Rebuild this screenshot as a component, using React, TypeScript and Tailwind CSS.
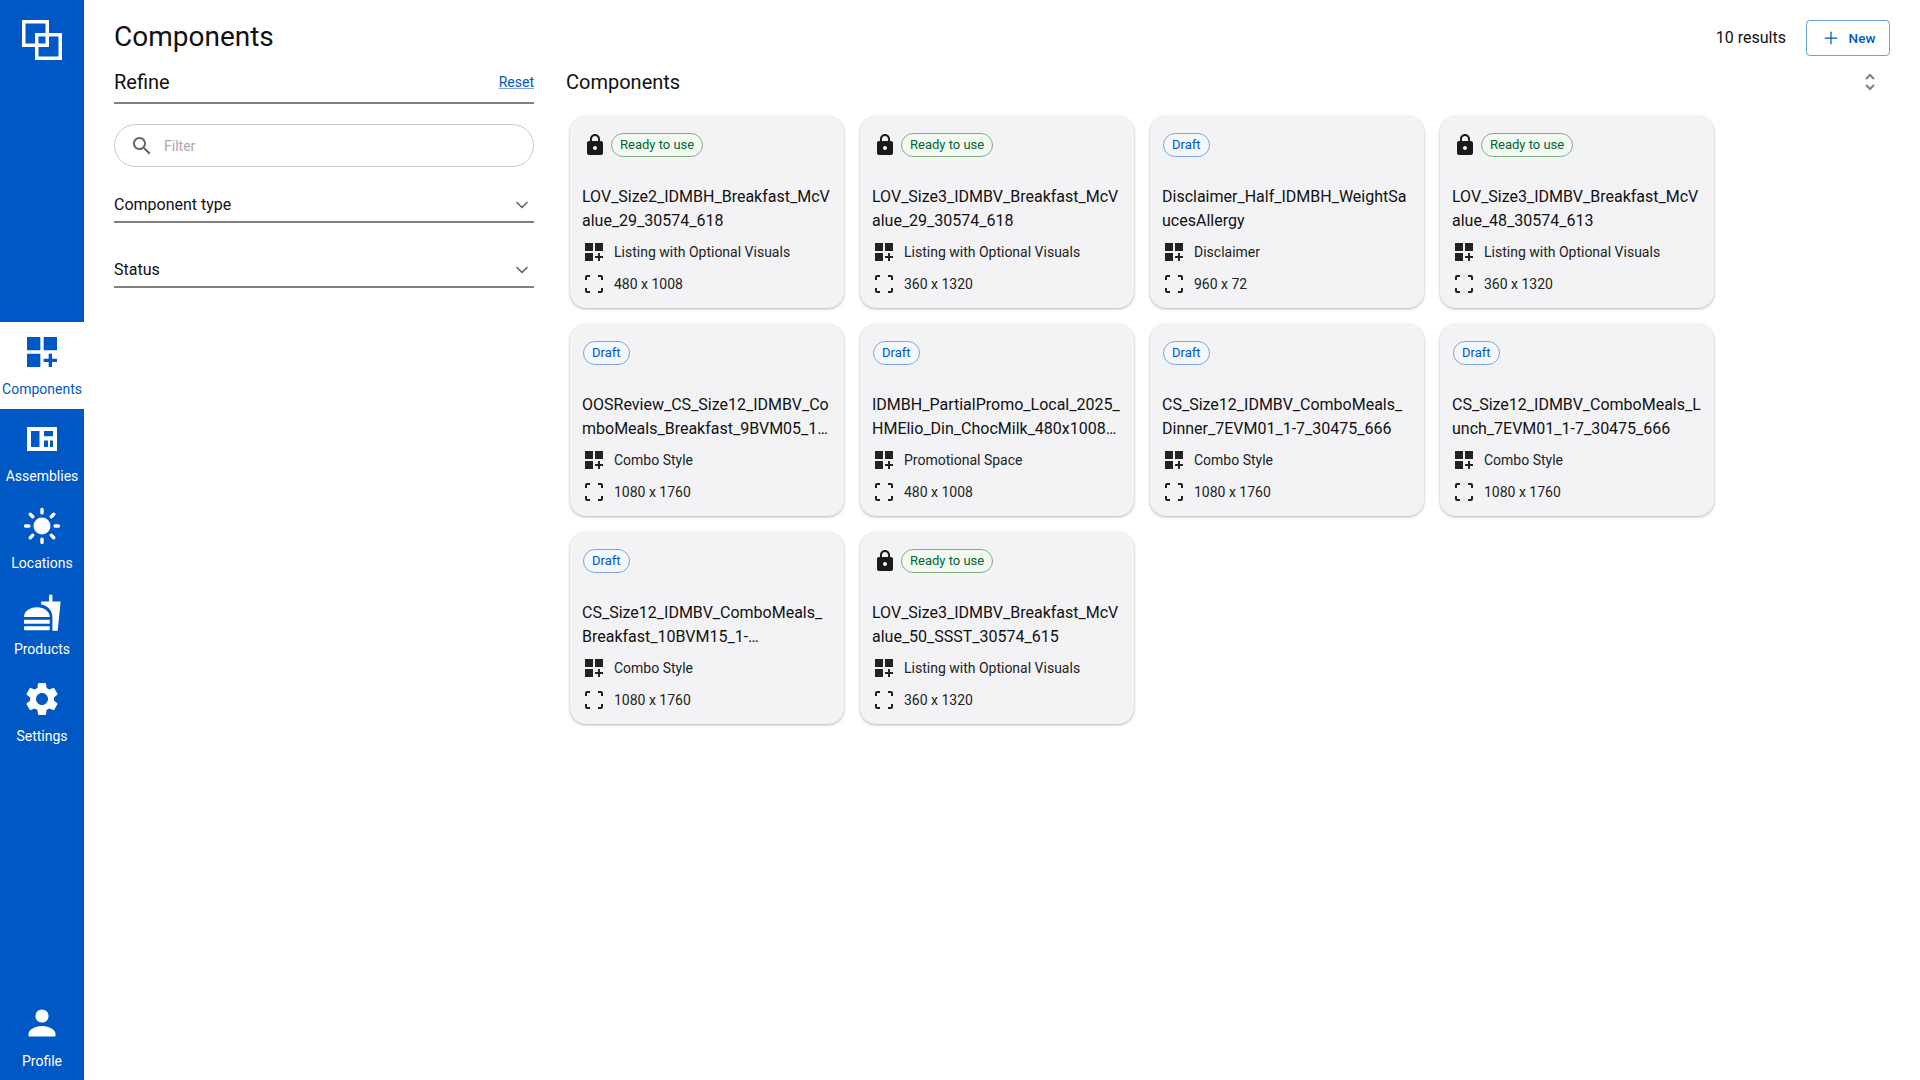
import React from "react";
import { ChevronDown, Plus } from "lucide-react";

const DASHBOARD =
  "M3 3h8v8H3zm10 0h8v8h-8zM3 13h8v8H3zm15 0h-2v3h-3v2h3v3h2v-3h3v-2h-3z";
const LOCK =
  "M18 8h-1V6c0-2.76-2.24-5-5-5S7 3.24 7 6v2H6c-1.1 0-2 .9-2 2v10c0 1.1.9 2 2 2h12c1.1 0 2-.9 2-2V10c0-1.1-.9-2-2-2zm-6 9c-1.1 0-2-.9-2-2s.9-2 2-2 2 .9 2 2-.9 2-2 2zm3.1-9H8.9V6c0-1.71 1.39-3.1 3.1-3.1 1.71 0 3.1 1.39 3.1 3.1v2z";
const SETTINGS =
  "M19.14 12.94c.04-.3.06-.61.06-.94 0-.32-.02-.64-.07-.94l2.03-1.58c.18-.14.23-.41.12-.61l-1.92-3.32c-.12-.22-.37-.29-.59-.22l-2.39.96c-.5-.38-1.03-.7-1.62-.94l-.36-2.54c-.04-.24-.24-.41-.48-.41h-3.84c-.24 0-.43.17-.47.41l-.36 2.54c-.59.24-1.13.57-1.62.94l-2.39-.96c-.22-.08-.47 0-.59.22L2.74 8.87c-.12.21-.08.47.12.61l2.03 1.58c-.05.3-.09.63-.09.94s.02.64.07.94l-2.03 1.58c-.18.14-.23.41-.12.61l1.92 3.32c.12.22.37.29.59.22l2.39-.96c.5.38 1.03.7 1.62.94l.36 2.54c.05.24.24.41.48.41h3.84c.24 0 .44-.17.47-.41l.36-2.54c.59-.24 1.13-.56 1.62-.94l2.39.96c.22.08.47 0 .59-.22l1.92-3.32c.12-.22.07-.47-.12-.61l-2.01-1.58zM12 15.6c-1.98 0-3.6-1.62-3.6-3.6s1.62-3.6 3.6-3.6 3.6 1.62 3.6 3.6-1.62 3.6-3.6 3.6z";
const SEARCH =
  "M15.5 14h-.79l-.28-.27C15.41 12.59 16 11.11 16 9.5 16 5.91 13.09 3 9.5 3S3 5.91 3 9.5 5.91 16 9.5 16c1.61 0 3.09-.59 4.23-1.57l.27.28v.79l5 4.99L20.49 19l-4.99-5zm-6 0C7.01 14 5 11.99 5 9.5S7.01 5 9.5 5 14 7.01 14 9.5 11.99 14 9.5 14z";

const DashboardIcon = ({ className }: { className: string }) => (
  <svg viewBox="0 0 24 24" fill="currentColor" className={className}>
    <path d={DASHBOARD} />
  </svg>
);

const AssembliesIcon = () => (
  <svg viewBox="0 0 30 24" fill="currentColor" className="w-[30px] h-6">
    <path
      fillRule="evenodd"
      d="M0 0h30v24H0zM4 4v16h8.500V4zm13 0v5.300h9V4zm0 9.500V20h4v-6.500zm6 0V20h3v-6.500z"
    />
  </svg>
);

const SunIcon = () => (
  <svg viewBox="0 0 40 40" fill="currentColor" className="w-10 h-10">
    <circle cx="20" cy="20" r="8.5" />
    <g stroke="currentColor" strokeWidth="3.4" strokeLinecap="round">
      <path d="M20 3.500v3.400M20 33.100v3.400M3.500 20h3.400M33.100 20h3.400M8.300 8.300l2.400 2.400M29.300 29.300l2.400 2.400M8.300 31.700l2.400-2.400M29.300 10.700l2.400-2.400" />
    </g>
  </svg>
);

const FoodIcon = () => (
  <svg viewBox="70 580 112 112" fill="currentColor" className="w-[37px] h-[37px]">
    <path d="M70 650C70 630 90 620 110 620C130 620 148 632 148 650Z" />
    <rect x="70" y="658" width="78" height="12" />
    <rect x="70" y="678" width="78" height="12" rx="3" />
    <path d="M122 603H146V582H156V603H181L172 691H156V650C156 628 140 615 122 612Z" />
  </svg>
);

const SettingsIcon = () => (
  <svg viewBox="0 0 24 24" fill="currentColor" className="w-10 h-10">
    <path d={SETTINGS} />
  </svg>
);

const PersonIcon = () => (
  <svg viewBox="0 0 40 40" fill="currentColor" className="w-10 h-10">
    <circle cx="20" cy="13" r="6.6" />
    <path d="M6.500 31c0-5.600 9-8 13.500-8s13.500 2.400 13.500 8v1.200c0 .7-.5 1.300-1.200 1.300H7.700c-.7 0-1.200-.6-1.200-1.300z" />
  </svg>
);

const FrameIcon = () => (
  <svg
    viewBox="0 0 24 24"
    fill="none"
    stroke="currentColor"
    strokeWidth="2"
    className="w-6 h-6 shrink-0"
  >
    <path d="M4 8V5a1 1 0 0 1 1-1h3M16 4h3a1 1 0 0 1 1 1v3M20 16v3a1 1 0 0 1-1 1h-3M8 20H5a1 1 0 0 1-1-1v-3" />
  </svg>
);

const LogoIcon = () => (
  <svg
    viewBox="0 0 40 40"
    fill="none"
    stroke="currentColor"
    strokeWidth="3.5"
    className="w-10 h-10"
  >
    <path d="M1.750 1.750h23.500v23.500H1.750z" />
    <path d="M14.750 14.750h23.500v23.500h-23.500z" />
  </svg>
);

const SortIcon = () => (
  <svg
    viewBox="0 0 12 18"
    fill="none"
    stroke="currentColor"
    strokeWidth="2"
    className="w-3 h-[18px] text-[#808080]"
  >
    <path d="M2 6l4-4 4 4M2 12l4 4 4-4" />
  </svg>
);

const navItems = [
  { label: "Components", icon: <DashboardIcon className="w-10 h-10" />, active: true },
  { label: "Assemblies", icon: <AssembliesIcon /> },
  { label: "Locations", icon: <SunIcon /> },
  { label: "Products", icon: <FoodIcon /> },
  { label: "Settings", icon: <SettingsIcon /> },
];

const cards = [
  { title: "LOV_Size2_IDMBH_Breakfast_McValue_29_30574_618", status: "ready", type: "Listing with Optional Visuals", size: "480 x 1008" },
  { title: "LOV_Size3_IDMBV_Breakfast_McValue_29_30574_618", status: "ready", type: "Listing with Optional Visuals", size: "360 x 1320" },
  { title: "Disclaimer_Half_IDMBH_WeightSaucesAllergy", status: "draft", type: "Disclaimer", size: "960 x 72" },
  { title: "LOV_Size3_IDMBV_Breakfast_McValue_48_30574_613", status: "ready", type: "Listing with Optional Visuals", size: "360 x 1320" },
  { title: "OOSReview_CS_Size12_IDMBV_ComboMeals_Breakfast_9BVM05_1_30475_666", status: "draft", type: "Combo Style", size: "1080 x 1760" },
  { title: "IDMBH_PartialPromo_Local_2025_HMElio_Din_ChocMilk_480x1008_30475_666", status: "draft", type: "Promotional Space", size: "480 x 1008" },
  { title: "CS_Size12_IDMBV_ComboMeals_Dinner_7EVM01_1-7_30475_666", status: "draft", type: "Combo Style", size: "1080 x 1760" },
  { title: "CS_Size12_IDMBV_ComboMeals_Lunch_7EVM01_1-7_30475_666", status: "draft", type: "Combo Style", size: "1080 x 1760" },
  { title: "CS_Size12_IDMBV_ComboMeals_Breakfast_10BVM15_1-7_30475_666", status: "draft", type: "Combo Style", size: "1080 x 1760" },
  { title: "LOV_Size3_IDMBV_Breakfast_McValue_50_SSST_30574_615", status: "ready", type: "Listing with Optional Visuals", size: "360 x 1320" },
];

const NavItem = ({ label, icon, active }: { label: string; icon: React.ReactNode; active?: boolean }) => (
  <div
    className={`h-[86.8px] flex flex-col items-center pt-[10px] ${
      active ? "bg-white text-[#0058c4]" : "text-white"
    }`}
  >
    <div className="h-10 flex items-center justify-center">{icon}</div>
    <div className="text-sm leading-5 mt-[7px] whitespace-nowrap">{label}</div>
  </div>
);

const FilterSelect = ({ label }: { label: string }) => (
  <div className="h-[34px] flex items-center justify-between border-b-2 border-[#808080] text-base text-[#111]">
    <span>{label}</span>
    <ChevronDown className="w-5 h-5 mr-[2px] text-[#666]" strokeWidth={2} />
  </div>
);

const Card = ({ title, status, type, size }: { title: string; status: string; type: string; size: string }) => (
  <div className="h-[192px] rounded-2xl bg-[#f3f3f6] shadow-[0_1px_3px_rgba(0,0,0,0.3)] pt-[17px] pl-3">
    <div className="h-6 flex items-center">
      {status === "ready" ? (
        <>
          <svg viewBox="0 0 24 24" fill="currentColor" className="w-6 h-6 ml-px mr-1 text-[#1a1a1a]">
            <path d={LOCK} />
          </svg>
          <span className="h-6 px-2 rounded-full border border-[#7fb17f] bg-[#f3f8f3] text-green-800 text-[13px] leading-[22px]">
            Ready to use
          </span>
        </>
      ) : (
        <span className="h-6 ml-px px-2 rounded-full border border-[#7ba6de] bg-[#f4f7fc] text-[#0058c4] text-[13px] leading-[22px]">
          Draft
        </span>
      )}
    </div>
    <div className="mt-[28px] w-[249px] h-12 text-base leading-6 text-[#111] line-clamp-2 [overflow-wrap:break-word]">
      {title}
    </div>
    <div className="mt-[7px] flex items-center gap-2 h-6 text-sm text-[#222]">
      <DashboardIcon className="w-6 h-6 shrink-0 text-[#222]" />
      <span>{type}</span>
    </div>
    <div className="mt-2 flex items-center gap-2 h-6 text-sm text-[#222]">
      <FrameIcon />
      <span>{size}</span>
    </div>
  </div>
);

export default function App() {
  return (
    <div className="flex h-screen bg-white font-['Roboto',sans-serif] overflow-hidden">
      <aside className="w-[84px] shrink-0 bg-[#0058c4] flex flex-col">
        <div className="h-[322px] pt-5 flex justify-center text-white">
          <LogoIcon />
        </div>
        {navItems.map((item) => (
          <NavItem key={item.label} {...item} />
        ))}
        <div className="mt-auto">
          <div className="h-[87px] flex flex-col items-center pt-[10px] text-white">
            <PersonIcon />
            <div className="text-sm leading-5 mt-[8px]">Profile</div>
          </div>
        </div>
      </aside>

      <main className="flex-1 flex flex-col pl-[30px] pr-[30px]">
        <div className="h-[62px] flex items-center justify-between pt-3">
          <h1 className="text-[28px] leading-9 text-[#111]">Components</h1>
          <div className="flex items-center gap-5 pt-[2px]">
            <span className="text-base text-[#111]">10 results</span>
            <button className="w-[84px] h-9 flex items-center justify-center gap-2 rounded border border-[#6f9fe0] text-[13.5px] font-medium text-[#0058c4]">
              <Plus className="w-5 h-5" strokeWidth={1.5} />
              New
            </button>
          </div>
        </div>

        <div className="flex gap-8">
          <div className="w-[420px] shrink-0">
            <div className="h-[42px] flex items-center justify-between border-b-2 border-[#808080] pb-px">
              <span className="text-xl text-[#111]">Refine</span>
              <a className="text-sm text-[#0058c4] underline decoration-[#7ba6de]">Reset</a>
            </div>
            <div className="mt-5 h-[43px] rounded-full border border-[#c8c8c8] flex items-center pl-[15px] gap-[10px]">
              <svg viewBox="0 0 24 24" fill="currentColor" className="w-6 h-6 text-[#666]">
                <path d={SEARCH} />
              </svg>
              <span className="text-sm text-[#aaa]">Filter</span>
            </div>
            <div className="mt-[22px]">
              <FilterSelect label="Component type" />
            </div>
            <div className="mt-[31px]">
              <FilterSelect label="Status" />
            </div>
          </div>

          <div className="flex-1">
            <div className="h-[42px] flex items-center justify-between pb-[3px] pr-[14px]">
              <span className="text-xl text-[#111]">Components</span>
              <SortIcon />
            </div>
            <div className="mt-3 ml-1 grid grid-cols-[repeat(4,274px)] gap-x-4 gap-y-4">
              {cards.map((card) => (
                <Card key={card.title} {...card} />
              ))}
            </div>
          </div>
        </div>
      </main>
    </div>
  );
}
